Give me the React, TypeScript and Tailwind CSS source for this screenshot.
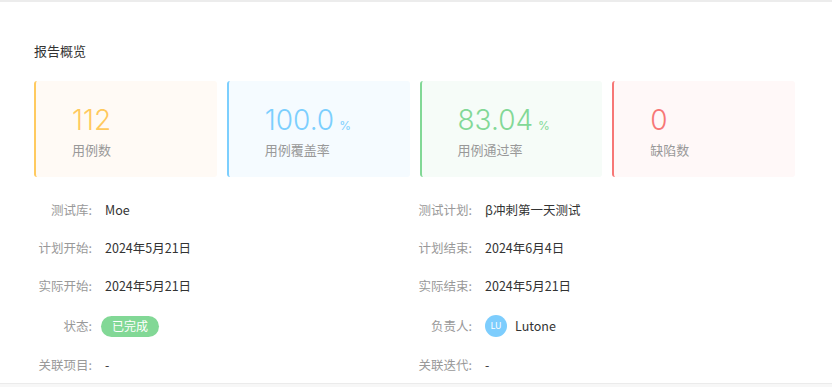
import React from 'react'

const cjk = { fontFamily: '"Noto Sans CJK SC", "Noto Sans", sans-serif' }

type Stat = {
	value: string
	unit?: string
	label: string
	border: string
	bg: string
	text: string
}

const stats: Stat[] = [
	{ value: '112', label: '用例数', border: 'border-[#ffca5f]', bg: 'bg-[#fffaf5]', text: 'text-[#ffc95d]' },
	{ value: '100.0', unit: '%', label: '用例覆盖率', border: 'border-[#7ccffe]', bg: 'bg-[#f5fbff]', text: 'text-[#7ccffe]' },
	{ value: '83.04', unit: '%', label: '用例通过率', border: 'border-[#82d896]', bg: 'bg-[#f6fcf8]', text: 'text-[#82d896]' },
	{ value: '0', label: '缺陷数', border: 'border-[#f77776]', bg: 'bg-[#fff8f8]', text: 'text-[#f77776]' },
]

/**
 * Stat card component.
 * @param {Stat} props The stat to show.
 * @returns The component.
 */
function StatCard({ value, unit, label, border, bg, text }: Stat) {
	return (
		<div className={`h-[96px] rounded-[3px] border-l-2 pl-[36px] pt-[23px] ${border} ${bg}`}>
			<div className={`flex items-baseline ${text}`}>
				<span className="text-[28px] font-light leading-[32px]" style={{ fontFamily: 'Inter, sans-serif' }}>
					{value}
				</span>
				{unit && <span className="ml-[5px] text-[12px]" style={{ fontFamily: 'Inter, sans-serif' }}>{unit}</span>}
			</div>
			<div className="mt-[4px] text-[13px] leading-[20px] text-[#999]" style={cjk}>
				{label}
			</div>
		</div>
	)
}

/**
 * Detail row component.
 * @param {string} props.label The label.
 * @param {React.ReactNode} props.children The value.
 * @returns The component.
 */
function Row({ label, h, children }: { label: string; h: string; children: React.ReactNode }) {
	return (
		<div className={`flex items-center ${h}`}>
			<div className="w-[58px] shrink-0 text-right text-[12.5px] text-[#999]">{label}:</div>
			<div className="ml-[13px] text-[12.5px] text-[#333]">{children}</div>
		</div>
	)
}

export default function App() {
	const heights = ['h-[38px]', 'h-[38px]', 'h-[38px]', 'h-[42px]', 'h-[36px]']
	const left: [string, React.ReactNode][] = [
		['测试库', 'Moe'],
		['计划开始', '2024年5月21日'],
		['实际开始', '2024年5月21日'],
		[
			'状态',
			<span className="-ml-[4px] inline-flex h-[21px] items-center rounded-full bg-[#82d896] px-[11px] text-[12px] text-white">
				已完成
			</span>,
		],
		['关联项目', '-'],
	]
	const right: [string, React.ReactNode][] = [
		['测试计划', 'β冲刺第一天测试'],
		['计划结束', '2024年6月4日'],
		['实际结束', '2024年5月21日'],
		[
			'负责人',
			<span className="flex items-center gap-[8px]">
				<span className="flex h-[22px] w-[22px] items-center justify-center rounded-full bg-[#7dcdfd] text-[9px] text-white">
					LU
				</span>
				<span>Lutone</span>
			</span>,
		],
		['关联迭代', '-'],
	]

	return (
		<div className="flex h-[387px] w-[832px] flex-col overflow-hidden bg-white" style={cjk}>
			<div className="h-[2px] bg-[#ececec]" />
			<div className="px-[34px] pt-[39px]">
				<div className="text-[13px] leading-[20px] text-[#333]">报告概览</div>
				<div className="mt-[20px] grid grid-cols-4 gap-[10px] pr-[3px]">
					{stats.map((s) => (
						<StatCard key={s.label} {...s} />
					))}
				</div>
				<div className="mt-[14px] grid grid-cols-2 pr-[4px]">
					<div>
						{left.map(([l, v], i) => (
							<Row key={l} label={l} h={heights[i]}>
								{v}
							</Row>
						))}
					</div>
					<div>
						{right.map(([l, v], i) => (
							<Row key={l} label={l} h={heights[i]}>
								{v}
							</Row>
						))}
					</div>
				</div>
			</div>
			<div className="mt-auto h-[4px] border-t border-[#ebebeb] bg-[#f7f7f7]" />
		</div>
	)
}
